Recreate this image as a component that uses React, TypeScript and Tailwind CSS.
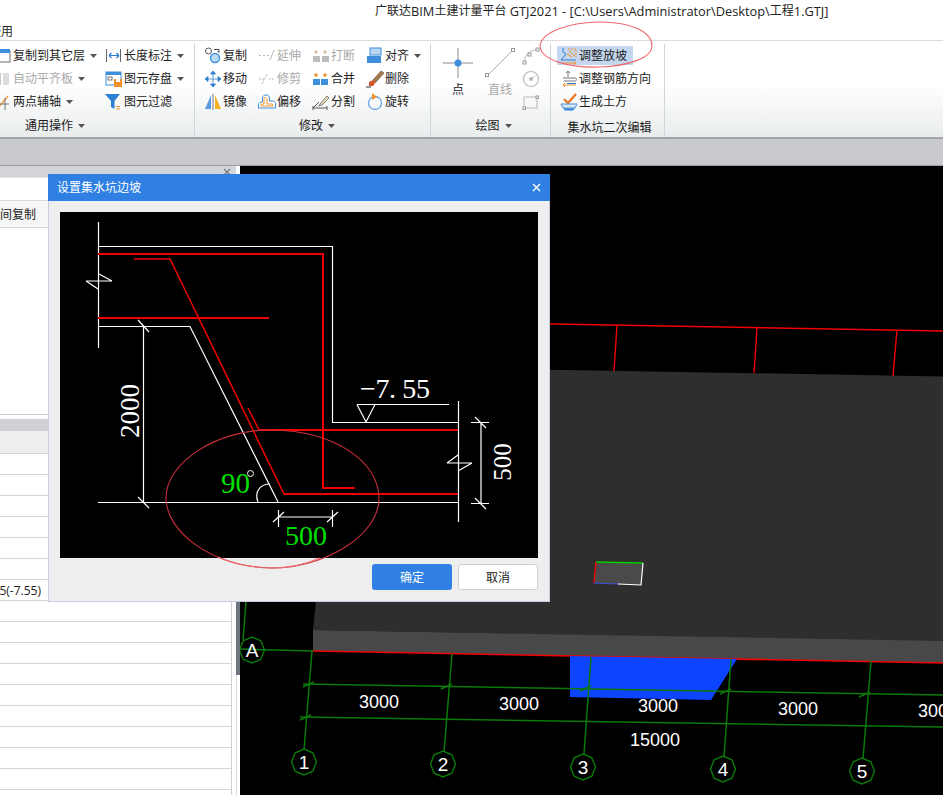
import type { ReactNode } from 'react';

const Caret = () => (
  <svg width="7" height="4" viewBox="0 0 7 4" className="ml-[5px] shrink-0">
    <path d="M0 0h7L3.5 4z" fill="#555" />
  </svg>
);

const Ico = ({ children }: { children: ReactNode }) => (
  <svg width="18" height="18" viewBox="0 0 18 18" fill="none" className="shrink-0">
    {children}
  </svg>
);

const BLUE = '#3d8fdc';
const ORANGE = '#f0902a';
const GREY = '#b9b9b9';

const icons: Record<string, ReactNode> = {
  layerCopy: (
    <>
      <rect x="1" y="4" width="15" height="11" fill="#fff" stroke="#6b6b6b" />
      <rect x="1" y="2" width="15" height="4" fill={BLUE} />
    </>
  ),
  flat: (
    <>
      <rect x="2" y="3" width="5" height="12" fill="#c9c9c9" />
      <rect x="9" y="3" width="6" height="12" fill="#dcdcdc" />
    </>
  ),
  twoPoint: (
    <>
      <path d="M3 16 14 3" stroke={ORANGE} strokeWidth="1.2" />
      <path d="M4 11h11M11 5v12" stroke="#777" />
    </>
  ),
  length: (
    <>
      <path d="M1.5 2v13M15.5 2v13" stroke="#666" />
      <path d="M4 8.5h10M4 8.5l2.5-2.5M4 8.5 6.5 11M14 8.5 11.5 6M14 8.5 11.5 11" stroke="#2d7fd0" strokeWidth="1.2" />
    </>
  ),
  store: (
    <>
      <rect x="1" y="2" width="15" height="13" fill="#fff" stroke={BLUE} />
      <rect x="1" y="2" width="15" height="3" fill={BLUE} />
      <rect x="3" y="7" width="4" height="3" stroke="#777" />
      <rect x="9" y="9" width="8" height="8" fill={ORANGE} />
      <rect x="11" y="9" width="4" height="3" fill="#fff" />
    </>
  ),
  filter: (
    <>
      <path d="M0 1h15L9.5 8v8L6 14V8z" fill="#2d7fd0" />
      <path d="M11 13.5h4M11 16h4" stroke={ORANGE} strokeWidth="1.2" />
    </>
  ),
  copy: (
    <>
      <circle cx="4.5" cy="4" r="3" fill="#fff" stroke="#555" />
      <circle cx="11" cy="11" r="4.5" fill="#bcd9f4" stroke={BLUE} strokeWidth="1.4" />
      <path d="M10 2.5h5v3M15 5.5l-1.5-1.5" stroke="#444" />
    </>
  ),
  extend: <path d="M1 8.5h2M5 8.5h2M9 8.5h2M12 13l4-10" stroke={GREY} />,
  breakLine: (
    <>
      <rect x="1" y="9" width="7" height="6" fill="#bdbdbd" />
      <rect x="10" y="9" width="7" height="6" fill="#bdbdbd" />
      <path d="M4 3v4M2 5h4M13 3v4M11 5h4" stroke="#cbb68f" />
    </>
  ),
  align: (
    <>
      <rect x="4" y="1" width="11" height="7" fill="#b9d5f1" stroke={BLUE} />
      <rect x="1" y="9" width="14" height="7" fill={BLUE} />
    </>
  ),
  move: (
    <path
      d="M9 1 6.5 4h5zM9 17l-2.500-3h5zM1 9l3-2.500v5zM17 9l-3-2.500v5zM9 4v10M4 9h10"
      fill="#2d7fd0"
      stroke="#2d7fd0"
      strokeWidth="0.8"
    />
  ),
  trim: <path d="M1 9h5M4 14 9 4M11 9h5" stroke={GREY} strokeDasharray="2 1" />,
  merge: (
    <>
      <rect x="1" y="9" width="7" height="6" fill={BLUE} />
      <rect x="9" y="9" width="7" height="6" fill={BLUE} />
      <path d="M4 3v4M2 5h4M13 3v4M11 5h4" stroke={ORANGE} strokeWidth="1.3" />
    </>
  ),
  brush: (
    <>
      <path d="M7 10 15 1l3 2-8 9z" fill="#a57a4a" stroke="#5b4630" strokeWidth="0.6" />
      <path d="M3 12 7 10l3 2-3 4H3z" fill="#d2562a" />
      <path d="M0 17h5" stroke="#333" />
    </>
  ),
  mirror: (
    <>
      <path d="M7 2v14H1z" fill="#5c9be0" />
      <path d="M9 1v16" stroke="#777" />
      <path d="M11 2v14h6z" fill="#f6b01e" />
    </>
  ),
  offset: (
    <>
      <path d="M0.500 15v-3c0-2 2-3 4-3V5c0-4 7-4 7 0v3h3c3 0 3 3 3 3v4z" fill="#fff" stroke={BLUE} />
      <path d="M3 13v-1c0-1 1-1 3-1V6c0-2 3-2 3 0v5h5c1 0 1 2 1 2z" fill="#fff" stroke={ORANGE} />
    </>
  ),
  split: (
    <>
      <path d="M1 15h14M1 13v4M15 13v4M1 15l6-6" stroke="#555" />
      <path d="M8 11 15 3l2 2-7 7-3 1z" fill="#e8d7b0" stroke="#555" strokeWidth="0.7" />
    </>
  ),
  rotate: (
    <>
      <circle cx="9" cy="10" r="6.500" stroke="#6aa7e2" strokeWidth="1.3" />
      <path d="M6 0v7l5-3z" fill={ORANGE} />
    </>
  ),
  arc: (
    <>
      <path d="M2.500 15C2.500 8 8 3 15 2.500" stroke={GREY} />
      <rect x="1" y="14" width="3" height="3" fill="#fff" stroke="#999" />
      <rect x="6" y="6" width="3" height="3" fill="#fff" stroke="#999" />
      <rect x="14" y="1" width="3" height="3" fill="#fff" stroke="#999" />
    </>
  ),
  circle: (
    <>
      <circle cx="9" cy="9" r="7.500" stroke={GREY} strokeWidth="1.2" />
      <path d="M9 9l4-3" stroke={GREY} />
      <rect x="8" y="8" width="2" height="2" stroke="#999" />
    </>
  ),
  rect: (
    <>
      <rect x="2" y="4" width="13" height="11" stroke={GREY} />
      <rect x="1" y="14" width="2.500" height="2.500" fill="#fff" stroke="#999" />
      <rect x="14" y="3" width="2.500" height="2.500" fill="#fff" stroke="#999" />
    </>
  ),
  slope: (
    <>
      <path d="M3 1v4l3 2-5 6h15" stroke="#2d7fd0" />
      <path d="M8 2h8v8" stroke={ORANGE} strokeDasharray="2 1" />
      <path d="M7 7l5 3M9 4l6 5" stroke={ORANGE} />
      <path d="M3 16h13M14 14.500l2 1.500-2 1.500" stroke={ORANGE} />
    </>
  ),
  rebar: (
    <>
      <path d="M8 1v6M6 3l2-2 2 2M3 8h12c2 0 2 3 0 3H4" stroke="#777" />
      <path d="M3 15h13M3 15l2-2M3 15l2 2" stroke={ORANGE} />
      <path d="M7 13.500h9" stroke="#2d7fd0" />
    </>
  ),
  earth: (
    <>
      <path d="M4 6l4 4 8-9" stroke="#e8792b" strokeWidth="2.400" />
      <path d="M1 11h16l-2 4H3z" fill="#d8e8f8" stroke="#4a8ed0" />
      <path d="M3 15.500h12l-2 2H5z" fill="#2d7fd0" />
    </>
  ),
};

type Item = { icon: string; label: string; caret?: boolean; off?: boolean };

const RibbonItem = ({ icon, label, caret, off }: Item) => (
  <div className={`flex h-[23px] items-center whitespace-nowrap ${off ? 'text-[#a9a9a9]' : 'text-[#1c1c1c]'}`}>
    <Ico>{icons[icon]}</Ico>
    <span className="pl-[1px]">{label}</span>
    {caret && <Caret />}
  </div>
);

const Column = ({ items, className }: { items: Item[]; className: string }) => (
  <div className={`shrink-0 ${className}`}>
    {items.map((it) => (
      <RibbonItem key={it.label} {...it} />
    ))}
  </div>
);

const Group = ({
  label,
  caret,
  className,
  labelClass,
  children,
}: {
  label: string;
  caret?: boolean;
  className: string;
  labelClass?: string;
  children: ReactNode;
}) => (
  <div className={`flex shrink-0 flex-col overflow-hidden border-r border-[#d3d6d8] ${className}`}>
    <div className="flex h-[69px]">{children}</div>
    <div className={`flex h-[24px] items-center justify-center pt-[1px] text-[#1c1c1c] ${labelClass ?? ''}`}>
      {label}
      {caret && <Caret />}
    </div>
  </div>
);

const Ribbon = () => (
  <div className="flex h-[99px] border-t border-b-2 border-t-[#dcdcdc] border-b-[#a2a4a6] bg-linear-to-b from-white from-45% to-[#e9eced] pt-[3px]">
    <Group label="通用操作" caret className="w-[195px]" labelClass="justify-start! pl-[25px]">
      <Column
        className="-ml-[6px] w-[111px]"
        items={[
          { icon: 'layerCopy', label: '复制到其它层', caret: true },
          { icon: 'flat', label: '自动平齐板', caret: true, off: true },
          { icon: 'twoPoint', label: '两点辅轴', caret: true },
        ]}
      />
      <Column
        className="w-[89px]"
        items={[
          { icon: 'length', label: '长度标注', caret: true },
          { icon: 'store', label: '图元存盘', caret: true },
          { icon: 'filter', label: '图元过滤' },
        ]}
      />
    </Group>
    <Group label="修改" caret className="w-[236px] pl-[9px]">
      <Column
        className="w-[54px]"
        items={[
          { icon: 'copy', label: '复制' },
          { icon: 'move', label: '移动' },
          { icon: 'mirror', label: '镜像' },
        ]}
      />
      <Column
        className="w-[54px]"
        items={[
          { icon: 'extend', label: '延伸', off: true },
          { icon: 'trim', label: '修剪', off: true },
          { icon: 'offset', label: '偏移' },
        ]}
      />
      <Column
        className="w-[54px]"
        items={[
          { icon: 'breakLine', label: '打断', off: true },
          { icon: 'merge', label: '合并' },
          { icon: 'split', label: '分割' },
        ]}
      />
      <Column
        className="w-[60px]"
        items={[
          { icon: 'align', label: '对齐', caret: true },
          { icon: 'brush', label: '删除' },
          { icon: 'rotate', label: '旋转' },
        ]}
      />
    </Group>
    <Group label="绘图" caret className="w-[120px] pl-[6px]">
      <div className="flex w-[42px] shrink-0 flex-col items-center pt-[4px]">
        <svg width="30" height="30" viewBox="0 0 30 30">
          <path d="M0 15h30M15 0v30" stroke="#8a8a8a" />
          <circle cx="15" cy="15" r="3.500" fill="#3d8fdc" />
        </svg>
        <span className="mt-[6px] text-[#1c1c1c]">点</span>
      </div>
      <div className="flex w-[42px] shrink-0 flex-col items-center pt-[4px] text-[#a9a9a9]">
        <svg width="30" height="30" viewBox="0 0 30 30">
          <path d="M2 28 28 2" stroke="#b0b0b0" />
          <rect x="0.500" y="25.500" width="3" height="3" fill="#fff" stroke="#999" />
          <rect x="26.500" y="0.500" width="3" height="3" fill="#fff" stroke="#999" />
        </svg>
        <span className="mt-[6px]">直线</span>
      </div>
      <div className="ml-[1px] shrink-0">
        {['arc', 'circle', 'rect'].map((k) => (
          <div key={k} className="flex h-[23px] items-center">
            <Ico>{icons[k]}</Ico>
          </div>
        ))}
      </div>
    </Group>
    <Group label="集水坑二次编辑" className="w-[114px] pl-[6px]" labelClass="pr-[2px] pt-[5px]">
      <div className="shrink-0">
        <div className="mb-[2px] mt-[2px] flex h-[19px] w-[76px] items-center bg-[#c5d7ef] pl-[3px] text-[#1c1c1c]">
          <Ico>{icons.slope}</Ico>
          <span className="pl-[1px]">调整放坡</span>
        </div>
        <div className="pl-[3px]">
          <RibbonItem icon="rebar" label="调整钢筋方向" />
          <RibbonItem icon="earth" label="生成土方" />
        </div>
      </div>
    </Group>
  </div>
);

const tableRows = Array.from({ length: 17 }, (_, i) => i);

const LeftPanel = () => (
  <div className="flex h-[629px] w-[240px] shrink-0 overflow-hidden bg-white">
    <div className="w-[236px] shrink-0">
      <div className="flex h-[11px] items-center justify-end bg-[#d4d5da] pr-[5px]">
        <svg width="8" height="8" viewBox="0 0 8 8">
          <path d="M1 1l6 6M7 1 1 7" stroke="#777" strokeWidth="1.2" />
        </svg>
      </div>
      <div className="h-[23px] border-t border-[#e2e2e2]" />
      <div className="flex h-[28px] items-center border-y border-[#d8d8d8] bg-[#f6f6f6] pt-[2px] text-[#1c1c1c]">间复制</div>
      <div className="h-[187px] border-b border-[#c9c9c9]" />
      <div className="h-[4px]" />
      <div className="h-[12px] bg-[#d0d1d5]" />
      <div className="h-[22px] w-[232px] bg-[#eeeeee]" />
      <div className="w-[232px] border-r border-[#cfcfcf]">
        {tableRows.map((i) => (
          <div key={i} className="flex h-[21px] items-center border-t border-[#d4d4d4] pt-[1px]">
            {i === 6 && (
              <div className="flex w-[41px] justify-end overflow-hidden whitespace-nowrap text-[#222]">5(-7.55)</div>
            )}
          </div>
        ))}
      </div>
    </div>
    <div className="flex w-[4px] flex-col">
      <div className="h-[249px]" />
      <div className="h-[260px] bg-[#6f7680]" />
      <div className="flex-1 border-l border-[#dcdcdc]" />
    </div>
  </div>
);

const GridBubble = ({ x, y, t }: { x: number; y: number; t: string }) => (
  <g>
    <polygon
      points={[0, 1, 2, 3, 4, 5, 6, 7]
        .map((i) => {
          const a = (Math.PI / 4) * i + Math.PI / 2;
          return `${x + 12.500 * Math.cos(a)},${y + 13 * Math.sin(a)}`;
        })
        .join(' ')}
      fill="none"
      stroke="#0b7a0b"
      strokeWidth="1.400"
    />
    <text x={x} y={y + 7} fontSize="19" fill="#fff" textAnchor="middle" fontFamily="'Liberation Sans', sans-serif">
      {t}
    </text>
  </g>
);

const Scene = () => (
  <svg viewBox="240 166 703 629" className="block h-[629px] w-[703px] bg-black">
    <polygon points="340,366 943,376.500 943,642 313,630" fill="#2e2e2e" />
    <polygon points="313,630 943,641 943,663 313,651" fill="#484848" />
    <path d="M540 323.700 943 331" stroke="#f00000" strokeWidth="1.400" />
    <path d="M617 325 614 371M757 328 754 373M897 330 893 376" stroke="#f00000" strokeWidth="1.400" />
    <path d="M313 651 943 663" stroke="#f00000" strokeWidth="1.600" />
    <polygon points="570,656 737,659 711,700 570,697" fill="#0c44ff" />
    <polygon points="596,562 643,563 641,585 594,583" fill="#4a4a4a" />
    <g fill="none">
      <path d="M596 562 643 563" stroke="#00d000" strokeWidth="1.400" />
      <path d="M596 562 594 583" stroke="#f00000" strokeWidth="1.400" />
      <path d="M643 563 641 585 618 584" stroke="#fff" strokeWidth="1.200" />
      <path d="M594 583 618 584" stroke="#3c50e0" strokeWidth="1.200" />
    </g>
    <g stroke="#0b7a0b" strokeWidth="1.500" fill="none">
      <path d="M246 602 243 640M240 649 313 651" />
      <path d="M312 651 304 750M452 654 444 752M591 657 584 754M731 659 724 757M871 661 863 759" />
      <path d="M303 684 943 695M300 717 943 727" />
      <path d="M303 687 314 682M441 689 452 684M580 691 591 686M720 694 731 689M859 697 870 692M300 720 311 715" />
    </g>
    <GridBubble x={252} y={650} t="A" />
    <GridBubble x={304} y={762} t="1" />
    <GridBubble x={443} y={764} t="2" />
    <GridBubble x={583} y={767} t="3" />
    <GridBubble x={723} y={769} t="4" />
    <GridBubble x={862} y={771} t="5" />
    <g fontSize="18" fill="#fff" textAnchor="middle" fontFamily="'Liberation Sans', sans-serif">
      <text x="379" y="708">3000</text>
      <text x="519" y="710">3000</text>
      <text x="658" y="712">3000</text>
      <text x="798" y="715">3000</text>
      <text x="938" y="717">3000</text>
      <text x="655" y="746">15000</text>
    </g>
  </svg>
);

const SlopeDrawing = () => (
  <svg viewBox="60 212 478 346" className="block h-[346px] w-[478px] bg-black">
    <g stroke="#fff" strokeWidth="1.200" fill="none">
      <path d="M98.500 222V348M98 246.500H332.500V422.500H458M98 326.500H190L278 502M98 502.500H458M458.500 401V522" />
      <path d="M143.500 326V502M138 320 149 332M138 497 149 508" />
      <path d="M86 281H112M99 274 112 281M86 281 98 289" />
      <path d="M447 463H472M447 463 458 455M472 463 458 471" />
      <path d="M357 404.500H449M357 404.500 366 422 375 404.500" />
      <path d="M481 422V503M471 422.500H489M471 503.500H489M475 417 486 428M475 498 486 509" />
      <path d="M278 517H332M278.500 510V527M332.500 510V527M273 522 284 512M327 522 338 512" />
      <path d="M258 502C254 492 260 484 270 484" />
    </g>
    <g stroke="#f00000" fill="none">
      <path d="M98 254H323V488H355" strokeWidth="2" />
      <path d="M98 318H269M284 494H458M259 430H458" strokeWidth="2" />
      <path d="M134 259H170L284 494M248 408 259 430" strokeWidth="1.500" />
    </g>
    <g fontFamily="'Liberation Serif', serif" fill="#fff">
      <text x="360" y="398" fontSize="28" textLength="70" lengthAdjust="spacing">−7. 55</text>
      <text x="139" y="411" fontSize="27" textAnchor="middle" transform="rotate(-90 139 411)">2000</text>
      <text x="511" y="462" fontSize="25" textAnchor="middle" transform="rotate(-90 511 462)">500</text>
      <text x="221" y="493" fontSize="29" fill="#00e000">90</text>
      <circle cx="250.500" cy="473.500" r="3" fill="none" stroke="#fff" />
      <text x="285" y="545" fontSize="28" fill="#00e000">500</text>
    </g>
  </svg>
);

const Dialog = () => (
  <div className="absolute left-[48px] top-[174px] flex h-[428px] w-[502px] flex-col border-x border-b border-[#c5ccdc] bg-[#eeeeee]">
    <div className="-mx-px flex h-[27px] shrink-0 items-center justify-between bg-[#2f80e2] pl-[9px] pr-[9px] text-white">
      <span>设置集水坑边坡</span>
      <svg width="9" height="9" viewBox="0 0 9 9">
        <path d="M1 1l7 7M8 1 1 8" stroke="#fff" strokeWidth="1.400" />
      </svg>
    </div>
    <div className="pl-[11px] pt-[11px]">
      <SlopeDrawing />
    </div>
    <div className="flex justify-end gap-[6px] pr-[11px] pt-[6px]">
      <button className="h-[26px] w-[80px] rounded-[3px] bg-[#2f80e2] pt-[1px] text-white">确定</button>
      <button className="h-[26px] w-[80px] rounded-[3px] border border-[#cfcfcf] bg-white pt-[1px] text-[#1c1c1c]">取消</button>
    </div>
  </div>
);

export default function App() {
  return (
    <div className="relative h-[795px] w-[943px] overflow-hidden bg-white font-['Open_Sans','Noto_Sans_CJK_SC',sans-serif] text-[12px] leading-none">
      <div className="flex h-[20px] items-center whitespace-pre pl-[375px] pt-[2px] text-[#222]">
        广联达<span className="text-[12.8px]">BIM</span>土建计量平台<span className="text-[12.8px]"> GTJ2021 - [C:\Users\Administrator\Desktop\</span>工程<span className="text-[12.8px]">1.GTJ]</span>
      </div>
      <div className="flex h-[20px] items-center pt-[3px] text-[#222]">
        <div className="flex w-[13px] justify-end overflow-hidden whitespace-nowrap">使用</div>
      </div>
      <Ribbon />
      <div className="h-[27px] border-b border-[#9a9c9e] bg-[#c8cacd]" />
      <div className="flex h-[629px]">
        <LeftPanel />
        <Scene />
      </div>
      <Dialog />
      {/* hand drawn red marks sit over everything */}
      <svg viewBox="0 0 943 795" className="pointer-events-none absolute left-0 top-0 h-[795px] w-[943px]" fill="none">
        <path
          d="M540 46C541 32 570 22 600 22 632 22 652 32 652 46 652 58 628 66 600 67 568 68 541 60 540 46Z"
          stroke="#ee6a6e"
          strokeWidth="1.100"
        />
        <path
          d="M166 498C166 462 218 429 272 430 336 431 378 462 379 498 379 536 324 568 272 568 212 567 166 532 166 498Z"
          stroke="#c9303a"
          strokeWidth="1.100"
        />
        <path d="M218 557C240 566 256 568 272 568 290 568 306 564 320 558" stroke="#f06a70" strokeWidth="1.100" />
      </svg>
    </div>
  );
}
